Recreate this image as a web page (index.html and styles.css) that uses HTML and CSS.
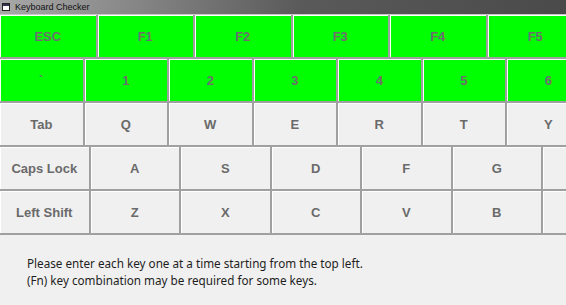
FILE: index.html
```html
<!DOCTYPE html>
<html lang="en">
<head>
    <meta charset="UTF-8">
    <title>Keyboard Checker</title>
    <link rel="stylesheet" href="styles.css">
</head>
<body>
    <div class="titlebar">
        <svg class="appicon" width="8" height="8" viewBox="0 0 8 8">
            <rect x="0.5" y="0.5" width="7" height="7" fill="#fff" stroke="#222"/>
            <rect x="1" y="1" width="6" height="2" fill="#335"/>
        </svg>
        <span>Keyboard Checker</span>
    </div>

    <div class="keys">
        <div class="row row-f">
            <div class="key on">ESC</div>
            <div class="key on">F1</div>
            <div class="key on">F2</div>
            <div class="key on">F3</div>
            <div class="key on">F4</div>
            <div class="key on">F5</div>
        </div>
        <div class="row row-num">
            <div class="key on">`</div>
            <div class="key on">1</div>
            <div class="key on">2</div>
            <div class="key on">3</div>
            <div class="key on">4</div>
            <div class="key on">5</div>
            <div class="key on">6</div>
        </div>
        <div class="row row-num">
            <div class="key">Tab</div>
            <div class="key">Q</div>
            <div class="key">W</div>
            <div class="key">E</div>
            <div class="key">R</div>
            <div class="key">T</div>
            <div class="key">Y</div>
        </div>
        <div class="row row-wide">
            <div class="key">Caps Lock</div>
            <div class="key">A</div>
            <div class="key">S</div>
            <div class="key">D</div>
            <div class="key">F</div>
            <div class="key">G</div>
            <div class="key"></div>
        </div>
        <div class="row row-wide">
            <div class="key">Left Shift</div>
            <div class="key">Z</div>
            <div class="key">X</div>
            <div class="key">C</div>
            <div class="key">V</div>
            <div class="key">B</div>
            <div class="key"></div>
        </div>
    </div>

    <div class="help">
        <p>Please enter each key one at a time starting from the top left.</p>
        <p>(Fn) key combination may be required for some keys.</p>
    </div>
</body>
</html>
```

FILE: styles.css
```css
html, body { margin: 0; padding: 0; }
body { width: 566px; height: 305px; overflow: hidden; background: #f0f0f0; font-family: "Liberation Sans", Arial, sans-serif; }

.titlebar { height: 14px; display: flex; align-items: center; gap: 5px; padding-left: 2px; background: linear-gradient(to right, #a8a8a8 0px, #8a8a8a 120px, #5a5a5a 300px, #4a4a4a 566px); border-bottom: 1px solid #c8c8c8; font-size: 9px; color: #111; }
.appicon { display: block; }

.keys { display: flex; flex-direction: column; }
.row { display: flex; height: 44px; overflow: hidden; }
.key { flex: 0 0 auto; box-sizing: border-box; display: flex; align-items: center; justify-content: center; white-space: nowrap; border-right: 2px solid #a0a0a0; border-bottom: 2px solid #a0a0a0; box-shadow: inset 1px 1px 0 #fff; background: #f0f0f0; color: #6a6a6a; font-weight: bold; font-size: 13px; }
.key.on { background: #00ff00; color: #6e6e6e; }

.row-f .key { width: 97.5px; }
.row-num .key { width: 84.5px; }
.row-wide .key { width: 90.5px; }

.help { padding: 20px 0 0 27px; font-family: "Noto Sans", "Open Sans", sans-serif; font-size: 11.7px; color: #1e1e1e; line-height: 17px; }
.help p { margin: 0; }
```
